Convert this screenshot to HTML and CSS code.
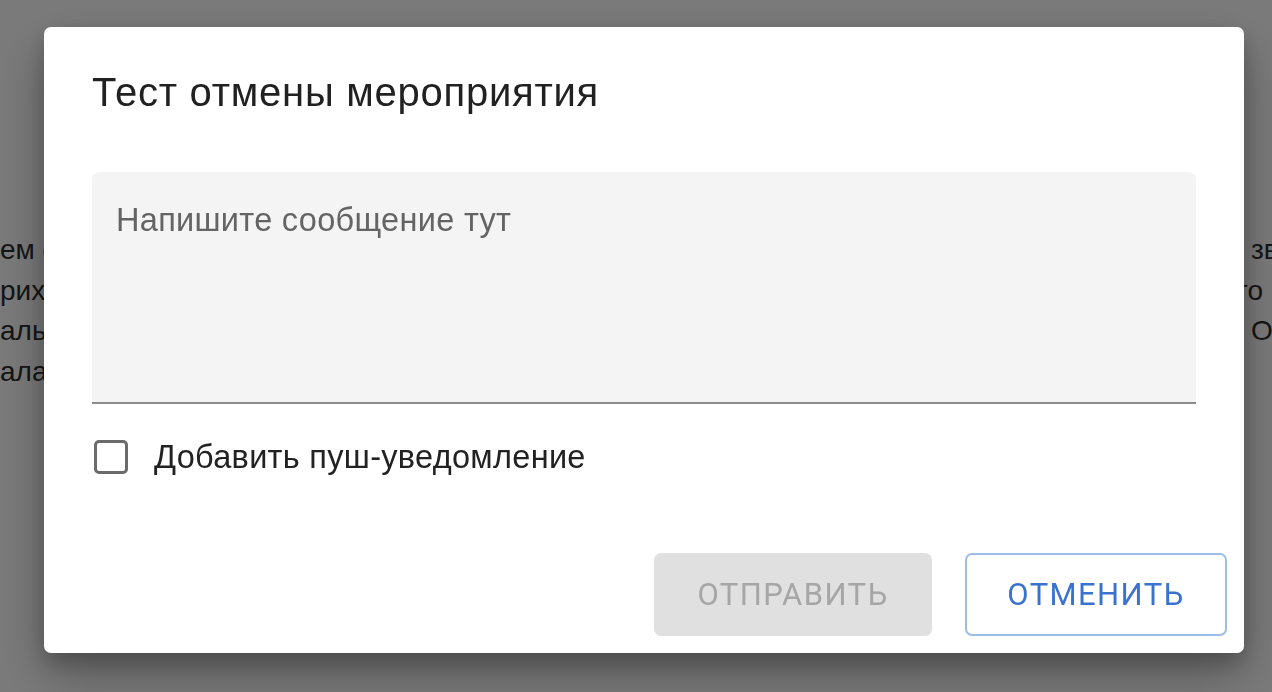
FILE: index.html
```html
<!DOCTYPE html>
<html lang="ru">
<head>
<meta charset="utf-8">
<title>Тест отмены мероприятия</title>
<link rel="stylesheet" href="styles.css">
</head>
<body>
<div class="page">
  <div class="bg-line"><span class="bg-left">ем с</span><span class="bg-right">зв</span></div>
  <div class="bg-line"><span class="bg-left">рих</span><span class="bg-right bg-shift">то</span></div>
  <div class="bg-line"><span class="bg-left">альч</span><span class="bg-right">О</span></div>
  <div class="bg-line"><span class="bg-left">алат</span><span class="bg-right"></span></div>
</div>
<div class="overlay">
  <div class="dialog" role="dialog">
    <h2 class="dialog-title">Тест отмены мероприятия</h2>
    <div class="dialog-content">
      <div class="field">
        <div class="placeholder">Напишите сообщение тут</div>
      </div>
      <label class="check-row">
        <span class="checkbox"></span>
        <span class="check-label">Добавить пуш-уведомление</span>
      </label>
    </div>
    <div class="actions">
      <button class="btn btn-disabled" type="button">Отправить</button>
      <button class="btn btn-outline" type="button">Отменить</button>
    </div>
  </div>
</div>
</body>
</html>
```

FILE: styles.css
```css
html, body {
  margin: 0;
  padding: 0;
  width: 1272px;
  height: 692px;
  overflow: hidden;
  background: #ffffff;
  font-family: "Liberation Sans", Arial, Helvetica, sans-serif;
}

.page {
  padding-top: 230px;
  color: #2e2e2e;
  font-size: 28px;
  line-height: 40.5px;
}

.bg-line {
  display: flex;
  white-space: nowrap;
  height: 40.5px;
}

.bg-left {
  width: 1251px;
  flex: none;
}

.bg-right {
  flex: none;
}

.bg-shift {
  margin-left: -16px;
}

.overlay {
  position: fixed;
  inset: 0;
  background: rgba(0, 0, 0, 0.52);
  padding: 27px 28px 39px 44px;
  box-sizing: border-box;
}

.dialog {
  width: 1200px;
  height: 626px;
  box-sizing: border-box;
  background: #ffffff;
  border-radius: 7px;
  box-shadow: 0 22px 50px rgba(0, 0, 0, 0.28), 0 10px 22px rgba(0, 0, 0, 0.2);
  display: flex;
  flex-direction: column;
}

.dialog-title {
  margin: 0;
  padding: 43px 48px 0;
  font-weight: 400;
  font-size: 40px;
  letter-spacing: 0.75px;
  line-height: 44px;
  color: #212121;
}

.dialog-content {
  padding: 58px 48px 0;
}

.field {
  height: 200px;
  background: #f4f4f4;
  border-bottom: 2px solid #8c8c8c;
  border-radius: 8px 8px 0 0;
  padding: 30px 24px 0;
}

.placeholder {
  font-size: 32.5px;
  letter-spacing: 0.3px;
  line-height: 36px;
  color: #646464;
}

.check-row {
  display: flex;
  align-items: center;
  margin-top: 36px;
  height: 34px;
}

.checkbox {
  width: 34px;
  height: 34px;
  box-sizing: border-box;
  border: 3px solid #6b6b6b;
  border-radius: 5px;
  margin-left: 2px;
  flex: none;
}

.check-label {
  margin-left: 26px;
  font-size: 32.5px;
  letter-spacing: 0.3px;
  line-height: 36px;
  color: #222222;
}

.actions {
  display: flex;
  justify-content: flex-end;
  gap: 33px;
  padding: 79px 17px 17px;
}

.btn {
  height: 83px;
  box-sizing: border-box;
  font-family: Roboto, "Liberation Sans", sans-serif;
  font-size: 31px;
  font-weight: 400;
  letter-spacing: 1.4px;
  text-transform: uppercase;
  border-radius: 7px;
  padding: 0;
  cursor: pointer;
}

.btn-disabled {
  width: 278px;
  background: #e0e0e0;
  color: #a6a6a6;
  border: none;
}

.btn-outline {
  width: 262px;
  background: #ffffff;
  color: #3a73cf;
  border: 2px solid #9dbde9;
}
```
